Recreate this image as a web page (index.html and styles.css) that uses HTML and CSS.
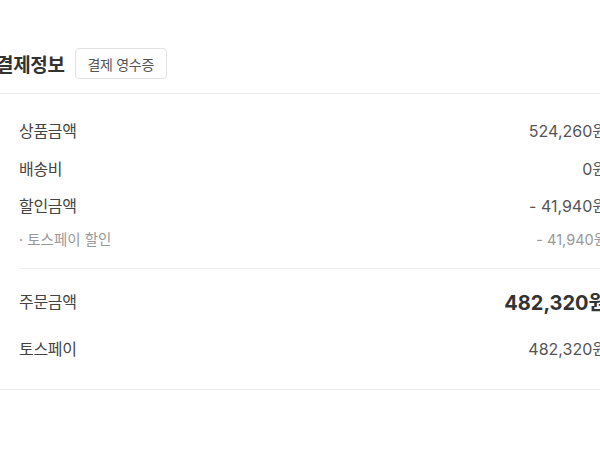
FILE: index.html
```html
<!DOCTYPE html>
<html lang="ko">
<head>
<meta charset="utf-8">
<link rel="stylesheet" href="styles.css">
</head>
<body>
<section class="pay">
  <div class="pay-head">
    <h2 class="pay-title">결제정보</h2>
    <button class="receipt-btn" type="button">결제 영수증</button>
  </div>
  <div class="pay-body">
    <div class="group">
      <div class="row"><span class="label">상품금액</span><span class="value">524,260원</span></div>
      <div class="row"><span class="label">배송비</span><span class="value">0원</span></div>
      <div class="row"><span class="label">할인금액</span><span class="value">- 41,940원</span></div>
      <div class="row sub"><span class="label">· 토스페이 할인</span><span class="value">- 41,940원</span></div>
    </div>
    <div class="divider"></div>
    <div class="group total-group">
      <div class="row total"><span class="label">주문금액</span><span class="value">482,320원</span></div>
      <div class="row method"><span class="label">토스페이</span><span class="value">482,320원</span></div>
    </div>
  </div>
</section>
</body>
</html>
```
FILE: styles.css
```css
html, body {
  margin: 0;
  padding: 0;
  background: #fff;
  overflow: hidden;
}
body {
  font-family: "Inter", "Noto Sans CJK KR", "Noto Sans", sans-serif;
  color: #333;
}
.pay {
  width: 634px;
  margin-left: -4px;
  padding-top: 48px;
}
.pay-head {
  display: flex;
  align-items: center;
  gap: 10px;
  height: 31px;
  padding-bottom: 14px;
  border-bottom: 1px solid #ececec;
}
.pay-title {
  margin: 0;
  font-size: 19px;
  font-weight: 700;
  color: #333;
  letter-spacing: -0.3px;
}
.receipt-btn {
  height: 31px;
  width: 92px;
  padding: 0;
  border: 1px solid #e2e2e2;
  border-radius: 4px;
  background: #fff;
  font-family: inherit;
  font-size: 14px;
  color: #555;
  letter-spacing: -0.3px;
}
.pay-body {
  padding: 25px 23px 30px;
  border-bottom: 1px solid #ececec;
}
.group {
  display: flex;
  flex-direction: column;
  gap: 15.5px;
}
.row {
  display: flex;
  justify-content: space-between;
  align-items: center;
  height: 22px;
  font-size: 16px;
}
.label {
  color: #444;
  letter-spacing: -0.3px;
}
.value {
  color: #555;
}
.row.sub {
  margin-top: -3.5px;
  height: 20px;
  font-size: 14.5px;
}
.row.sub .label {
  color: #999;
  letter-spacing: 0;
}
.row.sub .value {
  color: #999;
}
.divider {
  height: 1px;
  background: #efefef;
  margin: 20px 0 18px;
}
.total-group {
  gap: 22px;
}
.row.total {
  height: 28px;
}
.row.total .value {
  font-size: 20px;
  font-weight: 700;
  color: #333;
}
```
